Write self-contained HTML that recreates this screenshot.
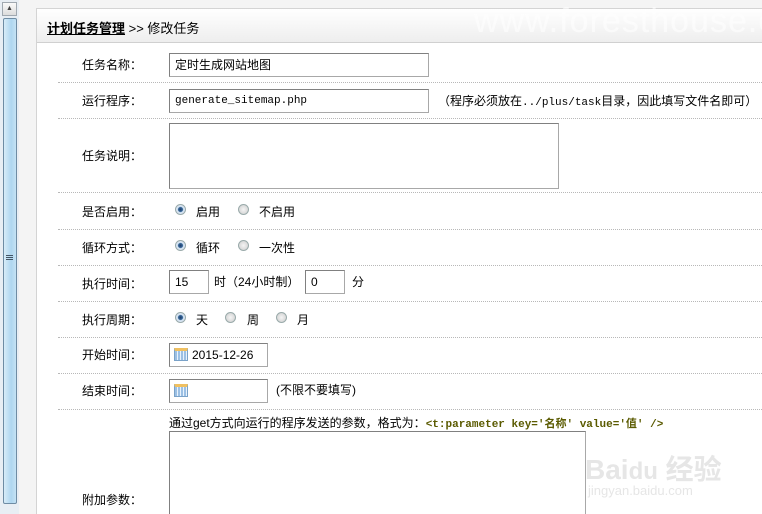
<!DOCTYPE html>
<html><head><meta charset="utf-8"><style>
*{margin:0;padding:0;box-sizing:border-box}
html,body{width:762px;height:514px;overflow:hidden}
body{background:#f4f4f4;font-family:"Liberation Sans","Noto Sans CJK SC","WenQuanYi Zen Hei",sans-serif;font-size:12px;color:#000;position:relative}
.a{position:absolute}
.sb{left:0;top:0;width:19px;height:514px;background:#e8eef4}
.up{left:2px;top:2px;width:15px;height:14px;background:linear-gradient(#fafafa,#dcdcdc);border:1px solid #a0a8b0;font-size:7px;text-align:center;line-height:11px;color:#444}
.th{left:3px;top:18px;width:14px;height:486px;background:linear-gradient(90deg,#d8ecf8,#aed6f0 60%,#c4e2f4);border:1px solid #6e8ca4;border-radius:2px}
.grip{left:6px;top:255px;width:7px;height:1px;background:#456;box-shadow:0 2px 0 #456,0 4px 0 #456}
.panel{left:36px;top:8px;width:740px;height:510px;background:#fff;border:1px solid #d4d4d4}
.hd{left:37px;top:9px;width:725px;height:34px;background:linear-gradient(#ffffff,#eeeeee);border-bottom:1px solid #d0d0d0;overflow:hidden}
.hd span{position:absolute;left:10px;top:9px;font-size:13px}
.hd b{text-decoration:underline}
.ln{left:58px;width:704px;height:0;border-top:1px dotted #b8b8b8}
.lb{left:82px;font-size:12px}
.in{background:#fff;border:1px solid #a8a8a8;border-top-color:#808080;border-left-color:#808080;height:24px;line-height:22px;padding-left:5px}
.rd{width:11px;height:11px;border-radius:50%;border:1px solid #9aa;background:radial-gradient(circle,#f4f4f4,#ccc)}
.rd.on{background:radial-gradient(circle,#1e3c6a 0,#3a6a9c 35%,#cfe0ee 45%,#eef 100%)}
.mono{font-family:"Liberation Mono","Noto Sans CJK SC",monospace;font-size:11px}
.cal{width:14px;height:13px;border:1px solid #7aa2c8;background:repeating-linear-gradient(90deg,#9cc0e4 0 2px,#e8f2fc 2px 3px);border-top:3px solid #f0c060}
</style></head><body>
<div class="a sb"></div>
<div class="a up">▲</div>
<div class="a th"></div>
<div class="a grip"></div>
<div class="a panel"></div>
<div class="a hd"><span><b>计划任务管理</b> &gt;&gt; 修改任务</span></div>
<div class="a" style="left:474px;top:2px;font-size:34px;color:#fff;opacity:.6;letter-spacing:1px">www.foresthouse.cn</div>

<div class="a lb" style="top:56px">任务名称：</div>
<div class="a in" style="left:169px;top:53px;width:260px">定时生成网站地图</div>
<div class="a ln" style="top:82px"></div>

<div class="a lb" style="top:92px">运行程序：</div>
<div class="a in mono" style="left:169px;top:89px;width:260px">generate_sitemap.php</div>
<div class="a" style="left:438px;top:92px">（程序必须放在<span class="mono">../plus/task</span>目录，因此填写文件名即可）</div>
<div class="a ln" style="top:118px"></div>

<div class="a lb" style="top:147px">任务说明：</div>
<div class="a in" style="left:169px;top:123px;width:390px;height:66px"></div>
<div class="a ln" style="top:192px"></div>

<div class="a lb" style="top:203px">是否启用：</div>
<div class="a rd on" style="left:175px;top:204px"></div><div class="a" style="left:196px;top:203px">启用</div>
<div class="a rd" style="left:238px;top:204px"></div><div class="a" style="left:259px;top:203px">不启用</div>
<div class="a ln" style="top:229px"></div>

<div class="a lb" style="top:239px">循环方式：</div>
<div class="a rd on" style="left:175px;top:240px"></div><div class="a" style="left:196px;top:239px">循环</div>
<div class="a rd" style="left:238px;top:240px"></div><div class="a" style="left:259px;top:239px">一次性</div>
<div class="a ln" style="top:265px"></div>

<div class="a lb" style="top:275px">执行时间：</div>
<div class="a in" style="left:169px;top:270px;width:40px">15</div>
<div class="a" style="left:214px;top:273px">时（24小时制）</div>
<div class="a in" style="left:305px;top:270px;width:40px">0</div>
<div class="a" style="left:352px;top:273px">分</div>
<div class="a ln" style="top:301px"></div>

<div class="a lb" style="top:311px">执行周期：</div>
<div class="a rd on" style="left:175px;top:312px"></div><div class="a" style="left:196px;top:311px">天</div>
<div class="a rd" style="left:225px;top:312px"></div><div class="a" style="left:247px;top:311px">周</div>
<div class="a rd" style="left:276px;top:312px"></div><div class="a" style="left:297px;top:311px">月</div>
<div class="a ln" style="top:337px"></div>

<div class="a lb" style="top:346px">开始时间：</div>
<div class="a in" style="left:169px;top:343px;width:99px;padding-left:22px">2015-12-26</div>
<div class="a cal" style="left:174px;top:348px"></div>
<div class="a ln" style="top:373px"></div>

<div class="a lb" style="top:382px">结束时间：</div>
<div class="a in" style="left:169px;top:379px;width:99px"></div>
<div class="a cal" style="left:174px;top:384px"></div>
<div class="a" style="left:276px;top:381px">(不限不要填写)</div>
<div class="a ln" style="top:409px"></div>

<div class="a" style="left:169px;top:414px">通过get方式向运行的程序发送的参数，格式为：<span class="mono" style="color:#5a5a00;font-weight:bold">&lt;t:parameter key='名称' value='值' /&gt;</span></div>
<div class="a in" style="left:169px;top:431px;width:417px;height:90px"></div>
<div class="a lb" style="top:491px">附加参数：</div>
<div class="a" style="left:585px;top:448px;font-size:28px;color:#e6e6e6;font-weight:bold">Bai<span style="font-size:24px">du</span> 经验</div>
<div class="a" style="left:588px;top:483px;font-size:13px;color:#e6e6e6">jingyan.baidu.com</div>
</body></html>
